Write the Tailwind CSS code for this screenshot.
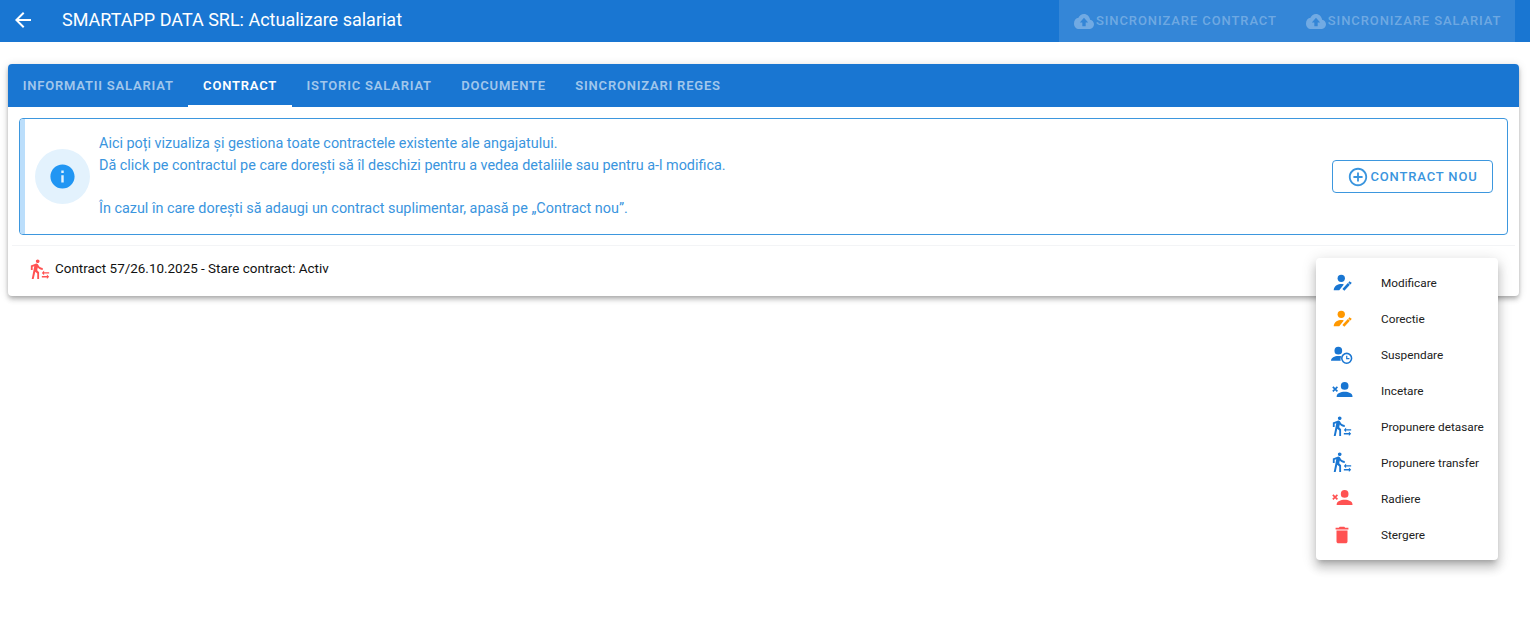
<!DOCTYPE html>
<html lang="ro">
<head>
    <meta charset="UTF-8">
    <title>Actualizare salariat</title>
    <script src="https://cdn.jsdelivr.net/npm/@tailwindcss/browser@4"></script>
</head>
<body class="relative h-[631px] overflow-hidden bg-white font-['Roboto',sans-serif] text-black">

    <!-- bara de sus -->
    <header class="flex h-[42px] items-center bg-[#1976d2] text-white">
        <svg class="mb-[2px] ml-[11px] h-6 w-6 fill-white" viewBox="0 0 24 24"><path d="M20 11H7.830l5.590-5.590L12 4l-8 8 8 8 1.410-1.410L7.830 13H20v-2z"/></svg>
        <h1 class="mb-[4px] ml-[27px] text-[18px]">SMARTAPP DATA SRL: Actualizare salariat</h1>
        <div class="mr-[15px] ml-auto flex h-full w-[456px] items-center bg-white/12 text-[13px] font-medium tracking-[0.9px] text-white/30">
            <div class="ml-[15px] flex items-center">
                <svg class="mr-[2px] h-[15px] w-5 fill-white/30" viewBox="0 4 24 16" preserveAspectRatio="none"><path d="M19.350 10.040C18.670 6.590 15.640 4 12 4 9.110 4 6.600 5.640 5.350 8.040 2.340 8.360 0 10.910 0 14c0 3.310 2.690 6 6 6h13c2.760 0 5-2.240 5-5 0-2.640-2.050-4.780-4.650-4.960zM14 13v4h-4v-4H7l5-5 5 5h-3z"/></svg>
                <span>SINCRONIZARE CONTRACT</span>
            </div>
            <div class="ml-[29px] flex items-center">
                <svg class="mr-[2px] h-[15px] w-5 fill-white/30" viewBox="0 4 24 16" preserveAspectRatio="none"><path d="M19.350 10.040C18.670 6.590 15.640 4 12 4 9.110 4 6.600 5.640 5.350 8.040 2.340 8.360 0 10.910 0 14c0 3.310 2.690 6 6 6h13c2.760 0 5-2.240 5-5 0-2.640-2.050-4.780-4.650-4.960zM14 13v4h-4v-4H7l5-5 5 5h-3z"/></svg>
                <span>SINCRONIZARE SALARIAT</span>
            </div>
        </div>
    </header>

    <main class="mt-[22px] mr-[11px] ml-2 rounded bg-white shadow-[0_2px_4px_-1px_rgba(0,0,0,0.2),0_4px_5px_0_rgba(0,0,0,0.14),0_1px_10px_0_rgba(0,0,0,0.12)]">
        <!-- taburi -->
        <nav class="flex h-[43px] rounded-t bg-[#1976d2] text-[13px] font-semibold tracking-[0.8px] text-white/60">
            <div class="flex items-center px-[14.7px]">INFORMATII SALARIAT</div>
            <div class="flex items-center border-b-2 border-white px-[14.7px] pt-[2px] text-white">CONTRACT</div>
            <div class="flex items-center px-[14.7px]">ISTORIC SALARIAT</div>
            <div class="flex items-center px-[14.7px]">DOCUMENTE</div>
            <div class="flex items-center px-[14.7px]">SINCRONIZARI REGES</div>
        </nav>

        <div class="px-[11px] pt-[11px]">
            <!-- mesaj informativ -->
            <section class="flex h-[117px] items-center overflow-hidden rounded border border-[#3d97de] text-[#3a95de]">
                <div class="h-full w-[5px] bg-[#bbdefb]"></div>
                <div class="ml-[10px] flex h-[55px] w-[55px] items-center justify-center rounded-full bg-[#e3f2fd]">
                    <svg class="h-[29px] w-[29px] fill-[#2196f3]" viewBox="0 0 24 24"><path d="M12 2C6.480 2 2 6.480 2 12s4.480 10 10 10 10-4.480 10-10S17.520 2 12 2zm1 15h-2v-6h2v6zm0-8h-2V7h2v2z"/></svg>
                </div>
                <div class="ml-[9px] text-[14.4px] leading-[21.6px]">
                    <p>Aici poți vizualiza și gestiona toate contractele existente ale angajatului.</p>
                    <p>Dă click pe contractul pe care dorești să îl deschizi pentru a vedea detaliile sau pentru a-l modifica.</p>
                    <p>&nbsp;</p>
                    <p>În cazul în care dorești să adaugi un contract suplimentar, apasă pe „Contract nou”.</p>
                </div>
                <div class="mr-[14px] ml-auto flex h-[33px] w-[161px] items-center justify-center rounded border border-[#3d97de] text-[13px] font-medium tracking-[0.85px]">
                    <svg class="h-[22px] w-[22px] fill-[#3a95de]" viewBox="0 0 24 24"><path d="M13 7h-2v4H7v2h4v4h2v-4h4v-2h-4V7zm-1-5C6.480 2 2 6.480 2 12s4.480 10 10 10 10-4.480 10-10S17.520 2 12 2zm0 18c-4.410 0-8-3.590-8-8s3.590-8 8-8 8 3.590 8 8-3.590 8-8 8z"/></svg>
                    <span class="ml-px">CONTRACT NOU</span>
                </div>
            </section>
        </div>

        <!-- lista contracte -->
        <div class="mx-[4px] mt-[10px] flex h-[51px] items-center border-t border-gray-100 pb-[3px] pl-[17px] text-[13.44px] text-[#111]">
            <svg class="mb-px h-[22px] w-[22px] fill-[#ff5252]" viewBox="0 0 24 24"><path d="M16.490 15.500v-1.750L14 16.250l2.490 2.500V17H22v-1.500zm3.020 4.250H14v1.500h5.510V23L22 20.500 19.510 18zM9.500 5.500c1.100 0 2-.9 2-2s-.9-2-2-2-2 .9-2 2 .9 2 2 2zM5.750 8.900 3 23h2.100l1.750-8L9 17v6h2v-7.550L8.950 13.400l.6-3C10.850 12 12.800 13 15 13v-2c-1.850 0-3.450-1-4.350-2.450l-.95-1.600C9.350 6.350 8.700 6 8 6c-.25 0-.5.05-.75.15L2 8.300V13h2V9.650l1.750-.75"/></svg>
            <span class="ml-[4px]">Contract 57/26.10.2025 - Stare contract: Activ</span>
        </div>
    </main>

    <!-- meniu contextual -->
    <ul class="absolute top-[258px] left-[1316px] w-[182px] rounded bg-white py-[7px] text-[11.8px] text-[#212121] shadow-[0_5px_5px_-3px_rgba(0,0,0,0.2),0_8px_10px_1px_rgba(0,0,0,0.14),0_3px_14px_2px_rgba(0,0,0,0.12)]">
        <li class="flex h-9 items-center pl-[15px]">
            <svg class="h-[22px] w-[22px] fill-[#1976d2] stroke-[#1976d2]" viewBox="0 0 24 24"><circle cx="11.200" cy="6.900" r="4" stroke="none"/><path stroke="none" d="M3 20c0-3.500 3-6.500 7-6.800 1.300-.1 2.800 0 4 .4L9 20z"/><path fill="none" stroke-width="3" d="M13.500 19.500l6-6.500"/><path stroke="none" d="M20 10.200l2.600 1.600-1.200 1.900-2.500-1.800z"/></svg>
            <span class="ml-[28px] pt-[2px]">Modificare</span>
        </li>
        <li class="flex h-9 items-center pl-[15px]">
            <svg class="h-[22px] w-[22px] fill-[#ff9800] stroke-[#ff9800]" viewBox="0 0 24 24"><circle cx="11.200" cy="6.900" r="4" stroke="none"/><path stroke="none" d="M3 20c0-3.500 3-6.500 7-6.800 1.300-.1 2.800 0 4 .4L9 20z"/><path fill="none" stroke-width="3" d="M13.500 19.500l6-6.500"/><path stroke="none" d="M20 10.200l2.600 1.600-1.200 1.900-2.500-1.800z"/></svg>
            <span class="ml-[28px] pt-[2px]">Corectie</span>
        </li>
        <li class="flex h-9 items-center pl-[15px]">
            <svg class="h-[22px] w-[22px] fill-[#1976d2]" viewBox="0 0 24 24"><circle cx="8" cy="7.300" r="4.200"/><path d="M0 18.300c0-3.300 3.800-5.300 8-5.300 1.200 0 2.300.1 3.300.4-.8 1.400-1.100 3.200-.7 4.900z"/><path fill-rule="evenodd" d="M17.100 9.400a6.200 6.200 0 1 0 0 12.400 6.200 6.200 0 1 0 0-12.400zm0 1.700a4.500 4.500 0 1 1 0 9 4.500 4.500 0 1 1 0-9z"/><path d="M16.500 12.700h1.300v2.700h2.300v1.200h-3.600z"/></svg>
            <span class="ml-[28px] pt-[2px]">Suspendare</span>
        </li>
        <li class="flex h-9 items-center pl-[15px]">
            <svg class="h-[22px] w-[22px] fill-[#1976d2] stroke-[#1976d2]" viewBox="0 0 24 24"><circle cx="14.900" cy="6.500" r="4.200" stroke="none"/><path stroke="none" d="M6.200 18.500v-1c0-3 4.400-4.800 8.700-4.800s8.500 1.800 8.500 4.800v1z"/><path fill="none" stroke-width="1.800" d="M2 7.500l5 5M7 7.500l-5 5"/></svg>
            <span class="ml-[28px] pt-[2px]">Incetare</span>
        </li>
        <li class="flex h-9 items-center pl-[15px]">
            <svg class="mb-[2px] h-[22px] w-[22px] fill-[#1976d2]" viewBox="0 0 24 24"><path d="M16.490 15.500v-1.750L14 16.250l2.490 2.500V17H22v-1.500zm3.020 4.250H14v1.500h5.510V23L22 20.500 19.510 18zM9.500 5.500c1.100 0 2-.9 2-2s-.9-2-2-2-2 .9-2 2 .9 2 2 2zM5.750 8.900 3 23h2.100l1.750-8L9 17v6h2v-7.550L8.950 13.400l.6-3C10.850 12 12.800 13 15 13v-2c-1.850 0-3.450-1-4.350-2.450l-.95-1.600C9.350 6.350 8.700 6 8 6c-.25 0-.5.05-.75.15L2 8.300V13h2V9.650l1.750-.75"/></svg>
            <span class="ml-[28px] pt-[2px]">Propunere detasare</span>
        </li>
        <li class="flex h-9 items-center pl-[15px]">
            <svg class="mb-[2px] h-[22px] w-[22px] fill-[#1976d2]" viewBox="0 0 24 24"><path d="M16.490 15.500v-1.750L14 16.250l2.490 2.500V17H22v-1.500zm3.020 4.250H14v1.500h5.510V23L22 20.500 19.510 18zM9.500 5.500c1.100 0 2-.9 2-2s-.9-2-2-2-2 .9-2 2 .9 2 2 2zM5.750 8.900 3 23h2.100l1.750-8L9 17v6h2v-7.550L8.950 13.400l.6-3C10.850 12 12.800 13 15 13v-2c-1.850 0-3.450-1-4.350-2.450l-.95-1.600C9.350 6.350 8.700 6 8 6c-.25 0-.5.05-.75.15L2 8.300V13h2V9.650l1.750-.75"/></svg>
            <span class="ml-[28px] pt-[2px]">Propunere transfer</span>
        </li>
        <li class="flex h-9 items-center pl-[15px]">
            <svg class="h-[22px] w-[22px] fill-[#ff5252] stroke-[#ff5252]" viewBox="0 0 24 24"><circle cx="14.900" cy="6.500" r="4.200" stroke="none"/><path stroke="none" d="M6.200 18.500v-1c0-3 4.400-4.800 8.700-4.800s8.500 1.800 8.500 4.800v1z"/><path fill="none" stroke-width="1.800" d="M2 7.500l5 5M7 7.500l-5 5"/></svg>
            <span class="ml-[28px] pt-[2px]">Radiere</span>
        </li>
        <li class="flex h-9 items-center pl-[15px]">
            <svg class="h-[22px] w-[22px] fill-[#ff5252]" viewBox="0 0 24 24"><path d="M6 19c0 1.100.9 2 2 2h8c1.100 0 2-.9 2-2V7H6v12zM19 4h-3.500l-1-1h-5l-1 1H5v2h14V4z"/></svg>
            <span class="ml-[28px] pt-[2px]">Stergere</span>
        </li>
    </ul>
</body>
</html>
